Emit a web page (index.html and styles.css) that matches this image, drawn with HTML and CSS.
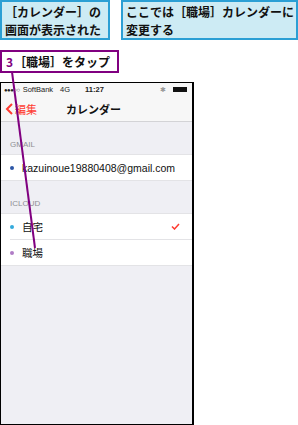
FILE: index.html
```html
<!DOCTYPE html>
<html>
<head>
  <meta charset="utf-8">
  <title>カレンダー</title>
  <link rel="stylesheet" href="styles.css">
</head>
<body>

<div class="page">
  <div class="notes">
    <div class="note note-left">［カレンダー］の<br>画面が表示された</div>
    <div class="note note-right">ここでは［職場］カレンダーに<br>変更する</div>
  </div>

  <div class="step"><span class="num">3</span>［職場］をタップ</div>

  <div class="phone">
    <div class="status">
      <span class="signal">●●●○○</span>
      <span>SoftBank</span>
      <span class="net">4G</span>
      <span class="time">11:27</span>
      <span class="bt">✱</span>
      <span class="battery"></span>
    </div>
    <div class="nav">
      <span class="back">
        <svg width="9" height="12" viewBox="0 0 9 12"><path d="M7 1 L2 6 L7 11" fill="none" stroke="#ff3b30" stroke-width="2"/></svg>編集
      </span>
      <span class="nav-title">カレンダー</span>
    </div>

    <div class="section">GMAIL</div>
    <div class="list">
      <div class="row"><span class="dot dot-gmail"></span>kazuinoue19880408@gmail.com</div>
    </div>

    <div class="section">ICLOUD</div>
    <div class="list">
      <div class="row"><span class="dot dot-home"></span>自宅
        <svg class="check" width="9" height="7" viewBox="0 0 9 7"><path d="M1 3.5 L3.5 6 L8 1" fill="none" stroke="#ff3b30" stroke-width="1.5"/></svg>
      </div>
      <div class="row"><span class="dot dot-work"></span>職場</div>
    </div>
  </div>

  <!-- 引き出し線 -->
  <svg class="leader" width="298" height="425"><line x1="12" y1="72" x2="35" y2="248" stroke="#800080" stroke-width="2"/></svg>
</div>

</body>
</html>
```

FILE: styles.css
```css
html, body {
  margin: 0;
  padding: 0;
  background: white;
}
.page {
  position: relative;
  width: 298px;
  height: 425px;
  overflow: hidden;
  font-family: "Noto Sans CJK JP", "Liberation Sans", sans-serif;
}
.notes {
  display: flex;
  gap: 11px;
}
.note {
  box-sizing: border-box;
  height: 40px;
  padding: 1px 0 0 3px;
  background-color: #cdebf4;
  border: 2px solid #2b9fd4;
  font-size: 12px;
  font-weight: bold;
  line-height: 18px;
  color: #111;
}
.note-left {
  width: 110px;
}
.note-right {
  width: 177px;
}
.step {
  box-sizing: border-box;
  width: 119px;
  height: 23px;
  margin-top: 10px;
  padding: 1px 0 0 4px;
  border: 2px solid #800080;
  font-size: 12px;
  font-weight: bold;
  line-height: 17px;
  color: #111;
}
.step .num {
  color: #800080;
  margin-right: 1px;
}
.phone {
  box-sizing: border-box;
  width: 194px;
  height: 343px;
  margin-top: 9px;
  border: 1px solid #000;
  border-right-width: 2px;
  background-color: #efeff4;
  font-family: "Liberation Sans", "Noto Sans CJK JP", sans-serif;
}
.status {
  display: flex;
  align-items: center;
  height: 13px;
  padding: 0 5px 0 3px;
  background-color: #f7f7f7;
  font-size: 7.5px;
  color: #222;
  gap: 3px;
}
.signal {
  font-size: 6px;
  letter-spacing: -0.5px;
}
.net {
  margin-left: 4px;
}
.time {
  margin-left: 12px;
  font-weight: bold;
}
.bt {
  margin-left: auto;
  color: #999;
  font-size: 7px;
}
.battery {
  width: 14px;
  height: 5px;
  background: #111;
  margin-left: 4px;
}
.nav {
  display: flex;
  align-items: center;
  height: 25px;
  background-color: #f7f7f7;
  border-bottom: 1px solid #d3d3d6;
}
.back {
  display: flex;
  align-items: center;
  gap: 1px;
  margin-left: 4px;
  color: #ff3b30;
  font-size: 11px;
}
.nav-title {
  margin-left: 29px;
  font-size: 11px;
  font-weight: bold;
  color: #111;
}
.section {
  height: 32px;
  box-sizing: border-box;
  padding: 18px 0 0 9px;
  font-size: 8px;
  color: #8e8e93;
}
.list {
  background: white;
  border-top: 1px solid #e3e3e6;
  border-bottom: 1px solid #e3e3e6;
}
.row {
  display: flex;
  align-items: center;
  height: 25px;
  margin-left: 9px;
  padding-right: 12px;
  font-size: 10.5px;
  color: #111;
}
.row + .row {
  border-top: 1px solid #e3e3e6;
}
.dot {
  width: 4px;
  height: 4px;
  border-radius: 50%;
  margin-right: 8px;
}
.dot-gmail {
  background-color: #2c56a6;
}
.dot-home {
  background-color: #34aadc;
}
.dot-work {
  background-color: #b07cc6;
}
.check {
  margin-left: auto;
}
.leader {
  position: absolute;
  left: 0;
  top: 0;
}
```
